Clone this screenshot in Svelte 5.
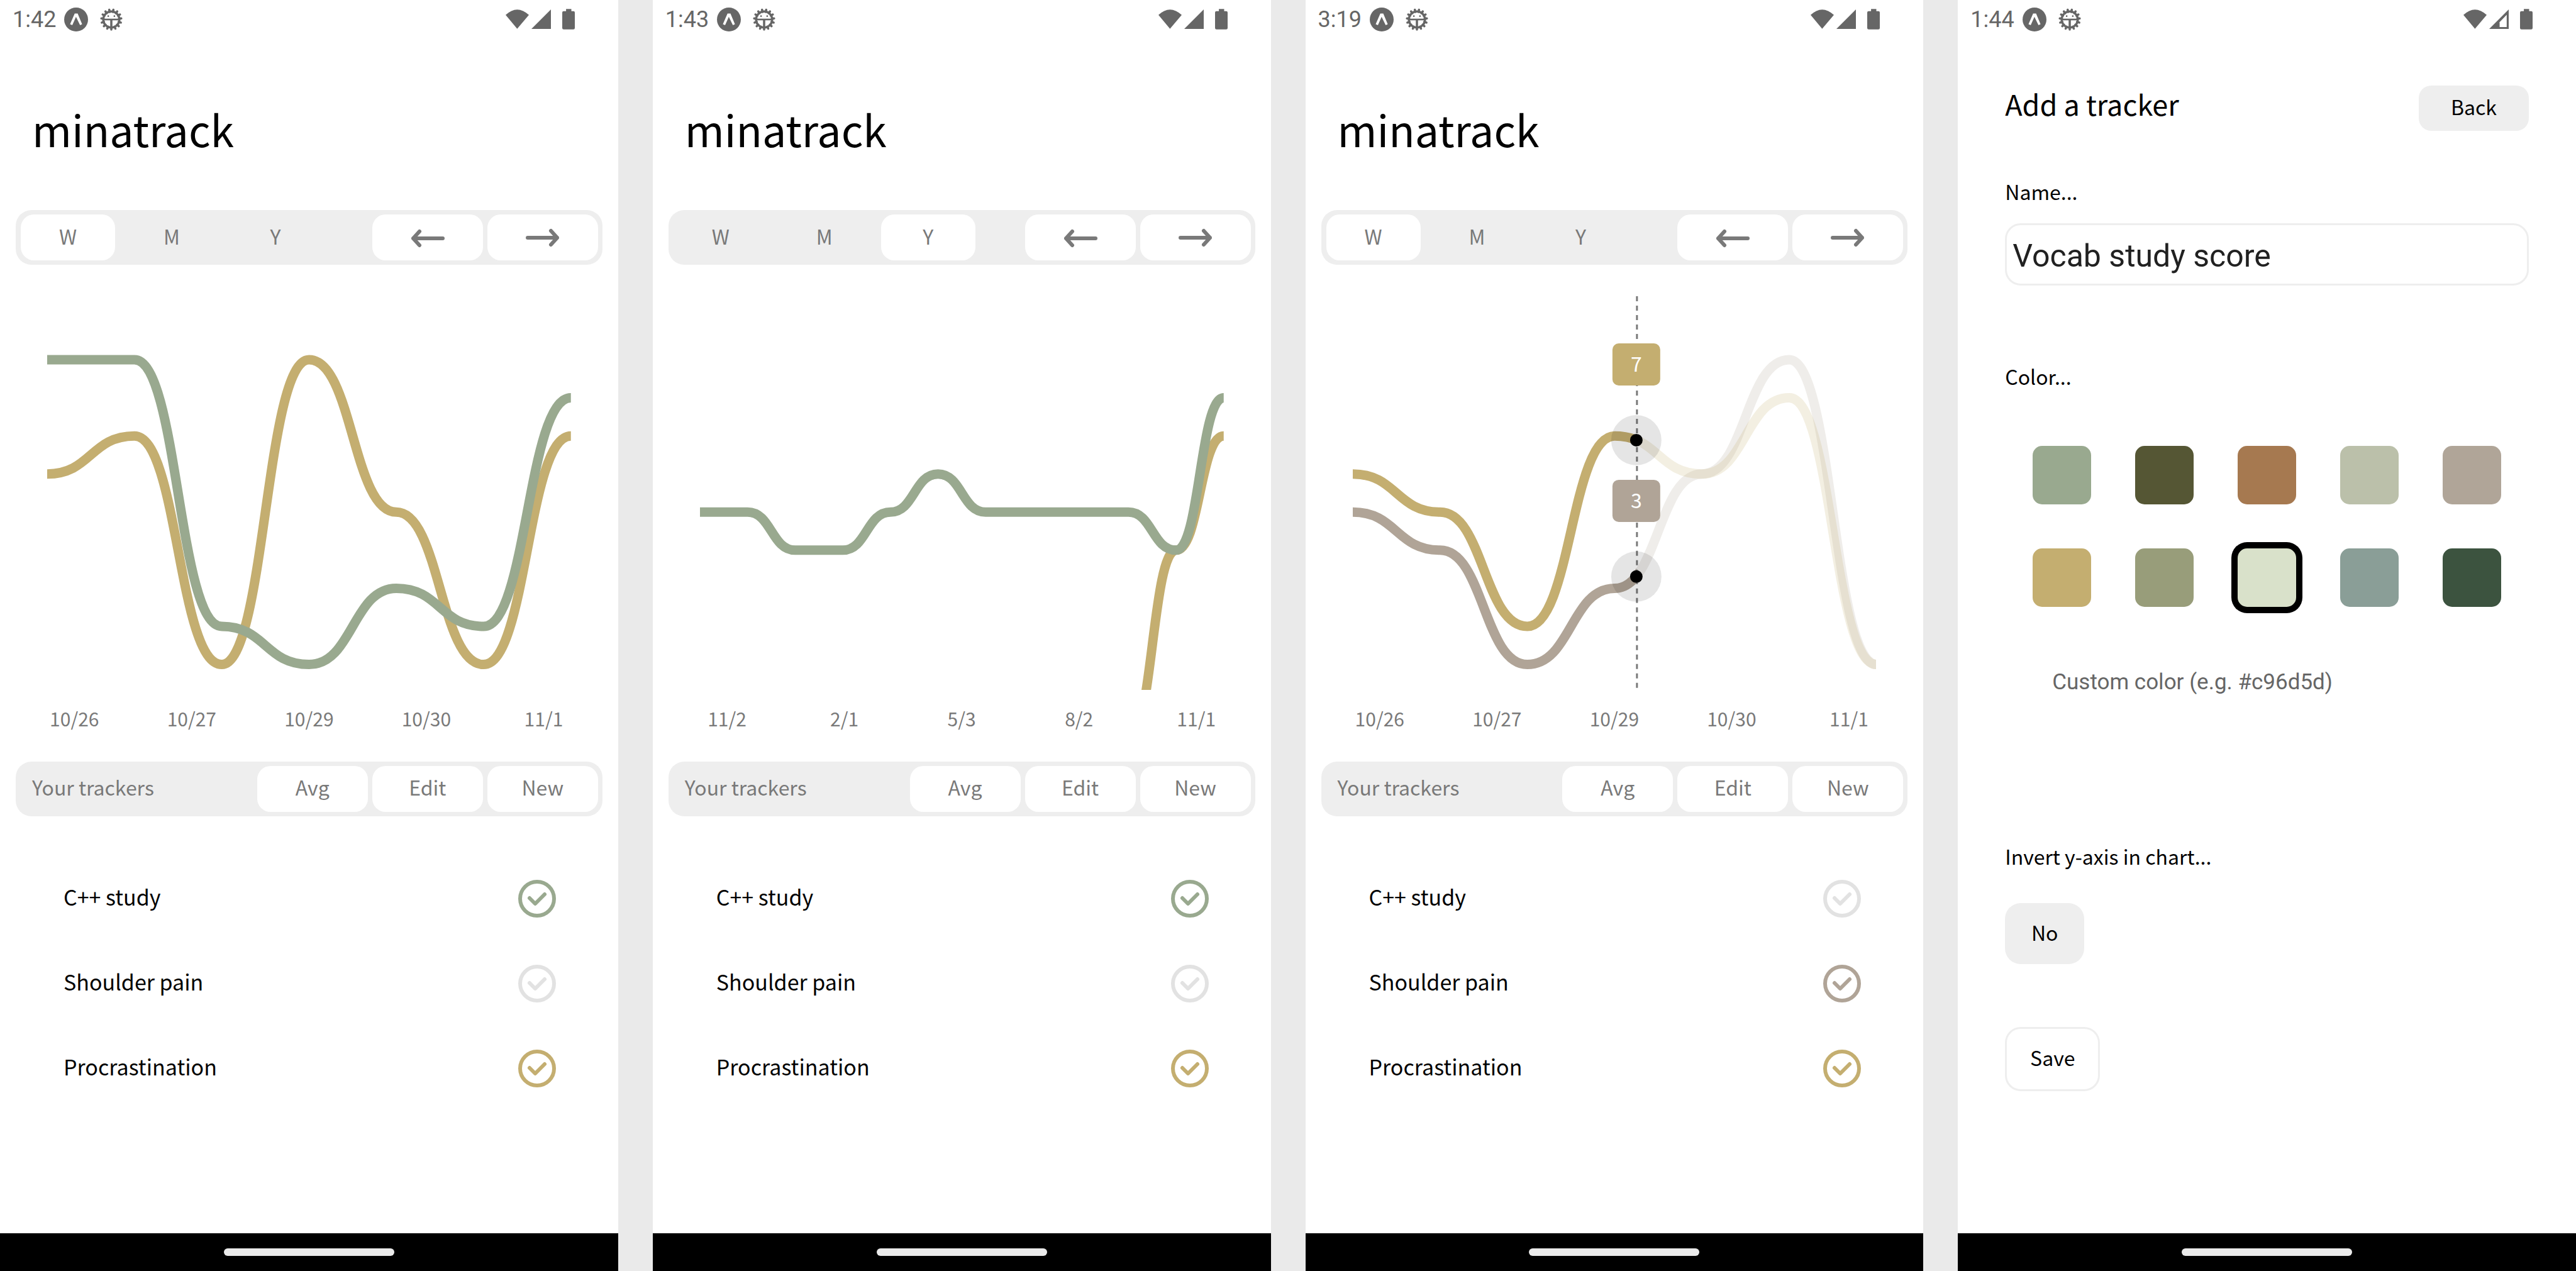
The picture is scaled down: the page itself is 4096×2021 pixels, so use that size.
<script>
  const GREEN = '#99a98f';
  const GOLD = '#c4ae70';
  const TAUPE = '#b0a497';

  const CHART_W = 833;
  const CHART_H = 626;
  const MAX_VALUE = 9;
  const TOP = 101;
  const STEP = 60.6;

  const yOf = (value) => TOP + (MAX_VALUE - value) * STEP;

  // Each segment leaves and enters its points horizontally.
  function linePath(values) {
    const dx = CHART_W / (values.length - 1);
    let d = '';
    values.forEach((value, i) => {
      if (value === null) return;
      const x = i * dx;
      const y = yOf(value);
      if (!d) {
        d = `M${x} ${y}`;
      } else {
        const mid = x - dx / 2;
        d += `C${mid} ${yOf(values[i - 1])} ${mid} ${y} ${x} ${y}`;
      }
    });
    return d;
  }

  const none = null;
  const screens = [
    {
      id: 'week',
      time: '1:42',
      range: 'W',
      labels: ['10/26', '10/27', '10/29', '10/30', '11/1'],
      series: [
        { color: GOLD, values: [6, 7, 1, 9, 5, 1, 7] },
        { color: GREEN, values: [9, 9, 2, 1, 3, 2, 8] }
      ],
      trackers: [
        { name: 'C++ study', color: GREEN, on: true },
        { name: 'Shoulder pain', color: TAUPE, on: false },
        { name: 'Procrastination', color: GOLD, on: true }
      ]
    },
    {
      id: 'year',
      time: '1:43',
      range: 'Y',
      labels: ['11/2', '2/1', '5/3', '8/2', '11/1'],
      series: [
        { color: GOLD, values: [none, none, none, none, none, none, none, none, none, -1, 4, 7] },
        { color: GREEN, values: [5, 5, 4, 4, 5, 6, 5, 5, 5, 5, 4, 8] }
      ],
      trackers: [
        { name: 'C++ study', color: GREEN, on: true },
        { name: 'Shoulder pain', color: TAUPE, on: false },
        { name: 'Procrastination', color: GOLD, on: true }
      ]
    },
    {
      id: 'cursor',
      time: '3:19',
      range: 'W',
      labels: ['10/26', '10/27', '10/29', '10/30', '11/1'],
      cursor: 451,
      series: [
        { color: TAUPE, values: [5, 4, 1, 3, 6, 9, 1], mark: { y: 446, text: '3' } },
        { color: GOLD, values: [6, 5, 2, 7, 6, 8, 1], mark: { y: 229, text: '7' } }
      ],
      trackers: [
        { name: 'C++ study', color: GREEN, on: false },
        { name: 'Shoulder pain', color: TAUPE, on: true },
        { name: 'Procrastination', color: GOLD, on: true }
      ]
    }
  ];

  const ranges = ['W', 'M', 'Y'];
  const swatches = [
    '#99a98f', '#555634', '#a67950', '#bbc0aa', '#b0a598',
    '#c4ae70', '#989d7a', '#d9e1ca', '#8a9e97', '#3c533f'
  ];
  const gearTeeth = Array.from({ length: 15 }, (_, i) => i * 24);

  let name = $state('Vocab study score');
  let custom = $state('');
  let picked = $state('#d9e1ca');
</script>

{#snippet statusBar(time, weak)}
  <header class="status">
    <span class="time">{time}</span>
    <svg class="expo" viewBox="354 40 129 129" aria-hidden="true">
      <circle cx="418.500" cy="104.500" r="64.500" fill="currentColor" />
      <path d="M411 72H427L451 130L440 135L418 90L398 135L386 130Z" fill="#fff" />
    </svg>
    <svg class="gear" viewBox="-21.500 -21.500 43 43" aria-hidden="true">
      {#each gearTeeth as angle}
        <path d="M0 14V18" transform="rotate({angle})" stroke="currentColor" stroke-width="4" stroke-linecap="round" />
      {/each}
      <circle r="14.500" fill="none" stroke="currentColor" stroke-width="4" />
      <path d="M-13 0H13" stroke="currentColor" stroke-width="3" />
      <path d="M0 0V13" stroke="currentColor" stroke-width="4" />
      <circle cx="-5.500" cy="-6" r="1.500" fill="currentColor" />
      <circle cx="5.500" cy="-6" r="1.500" fill="currentColor" />
    </svg>
    <span class="spacer"></span>
    <svg class="wifi" viewBox="0 0 129 107" aria-hidden="true">
      <path d="M0 30Q64 -30 129 30L64 107Z" fill="currentColor" />
    </svg>
    <svg class="signal" viewBox="0 0 107 107" aria-hidden="true">
      <path d="M0 107L107 0V107Z" fill="currentColor" />
      {#if weak}
        <path d="M57 70L96 29V97H57Z" fill="#fff" />
      {/if}
    </svg>
    <svg class="battery" viewBox="0 0 69 112" aria-hidden="true">
      <rect y="12" width="69" height="100" rx="8" fill="currentColor" />
      <path d="M21 0H50V14H21Z" fill="currentColor" />
    </svg>
  </header>
{/snippet}

{#snippet navBar()}
  <footer class="nav"><span class="pill"></span></footer>
{/snippet}

<main class="board">
  {#each screens as screen (screen.id)}
    <section class="phone">
      {@render statusBar(screen.time, false)}
      <div class="tracker-page">
        <h1>minatrack</h1>

        <div class="toolbar">
          <div class="ranges">
            {#each ranges as range}
              <button type="button" class="range" class:active={range === screen.range}>{range}</button>
            {/each}
          </div>
          <div class="actions">
            <button type="button" class="action" aria-label="Previous">
              <svg class="arrow" viewBox="0 0 56 32" aria-hidden="true"><path d="M52 17H5M15 6L5 17L15 28" /></svg>
            </button>
            <button type="button" class="action" aria-label="Next">
              <svg class="arrow" viewBox="0 0 56 32" aria-hidden="true"><path d="M4 16H51M41 5L51 16L41 27" /></svg>
            </button>
          </div>
        </div>

        <svg class="chart" viewBox="0 0 {CHART_W} {CHART_H}" role="img" aria-label="Tracker history">
          {#if screen.cursor}
            <defs>
              <clipPath id="past"><rect width={screen.cursor} height={CHART_H} /></clipPath>
              <clipPath id="future"><rect x={screen.cursor} width={CHART_W - screen.cursor} height={CHART_H} /></clipPath>
            </defs>
            {#each screen.series as line}
              <path class="line" clip-path="url(#past)" d={linePath(line.values)} stroke={line.color} />
              <path class="line faded" clip-path="url(#future)" d={linePath(line.values)} stroke={line.color} />
            {/each}
            <path class="cursor" d="M{screen.cursor + 1} 0V{CHART_H}" />
            {#each screen.series as line}
              <circle cx={screen.cursor} cy={line.mark.y} r="40" fill="#000" opacity="0.1" />
              <circle cx={screen.cursor} cy={line.mark.y} r="10" fill="#000" />
              <rect x={screen.cursor - 38} y={line.mark.y - 154} width="76" height="67" rx="10" fill={line.color} />
              <text class="mark" x={screen.cursor} y={line.mark.y - 109}>{line.mark.text}</text>
            {/each}
          {:else}
            {#each screen.series as line}
              <path class="line" d={linePath(line.values)} stroke={line.color} />
            {/each}
          {/if}
        </svg>

        <div class="axis">
          {#each screen.labels as label}
            <span>{label}</span>
          {/each}
        </div>

        <div class="toolbar">
          <h2>Your trackers</h2>
          <div class="actions">
            <button type="button" class="action">Avg</button>
            <button type="button" class="action">Edit</button>
            <button type="button" class="action">New</button>
          </div>
        </div>

        <ul class="trackers">
          {#each screen.trackers as tracker}
            <li>
              <label class="tracker">
                <span class="tracker-name">{tracker.name}</span>
                <span class="tick" style="color: {tracker.on ? tracker.color : '#e2e2e2'}">
                  <input type="checkbox" checked={tracker.on} />
                  <svg viewBox="0 0 60 60" aria-hidden="true">
                    <path d="M18 29L27 38L42 23" />
                  </svg>
                </span>
              </label>
            </li>
          {/each}
        </ul>
      </div>
      {@render navBar()}
    </section>
  {/each}

  <section class="phone">
    {@render statusBar('1:44', true)}
    <form class="form-page" onsubmit={(event) => event.preventDefault()}>
      <div class="form-head">
        <h2 class="form-title">Add a tracker</h2>
        <button type="button" class="back">Back</button>
      </div>

      <label class="field-label" for="tracker-name">Name...</label>
      <input id="tracker-name" class="name-input" type="text" bind:value={name} />

      <fieldset>
        <legend class="field-label">Color...</legend>
        <div class="swatches">
          {#each swatches as color}
            <input
              type="radio"
              name="color"
              value={color}
              aria-label={color}
              bind:group={picked}
              class="swatch"
              style="background-color: {color}"
            />
          {/each}
        </div>
        <input
          class="custom-input"
          type="text"
          aria-label="Custom color"
          placeholder="Custom color (e.g. #c96d5d)"
          bind:value={custom}
        />
      </fieldset>

      <span class="field-label" id="invert-label">Invert y-axis in chart...</span>
      <button type="button" class="invert" aria-describedby="invert-label">No</button>
      <button type="submit" class="save">Save</button>
    </form>
    {@render navBar()}
  </section>
</main>

<style>
  :global(body) {
    margin: 0;
    background: #eaeaea;
  }

  .board {
    display: grid;
    grid-template-columns: repeat(4, minmax(0, 1fr));
    gap: 55px;
    min-height: 100vh;
    color: #000;
    font-family: 'Noto Sans CJK JP', 'Noto Sans', sans-serif;
    font-size: 32px;
    line-height: 40px;
  }

  .board * {
    box-sizing: border-box;
  }

  .phone {
    display: flex;
    flex-direction: column;
    background: #fff;
  }

  /* Status bar */
  .status {
    display: flex;
    align-items: center;
    height: 61px;
    padding: 0 69px 0 20px;
    color: #666;
  }

  .status svg {
    display: block;
    flex: none;
  }

  .time {
    font-family: Roboto, sans-serif;
    font-size: 36px;
  }

  .spacer {
    flex: 1;
  }

  .expo {
    width: 38px;
    height: 38px;
    margin-left: 13px;
  }

  .gear {
    width: 38px;
    height: 38px;
    margin-left: 18px;
  }

  .wifi {
    width: 37px;
    height: 31px;
  }

  .signal {
    width: 31px;
    height: 31px;
    margin-left: 4px;
  }

  .battery {
    width: 20px;
    height: 33px;
    margin-left: 18px;
  }

  /* Navigation bar */
  .nav {
    display: flex;
    align-items: center;
    justify-content: center;
    height: 60px;
    background: #000;
  }

  .pill {
    width: 271px;
    height: 12px;
    border-radius: 6px;
    background: #eaeaea;
  }

  /* Buttons */
  button {
    margin: 0;
    padding: 0 0 6px;
    border: 0;
    color: inherit;
    font: inherit;
    cursor: pointer;
  }

  h1,
  h2 {
    margin: 0;
    font-weight: 400;
  }

  /* Tracker screens */
  .tracker-page {
    flex: 1;
    padding: 94px 25px 0;
  }

  h1 {
    margin: 0 26px 79px;
    font-size: 68px;
    line-height: 100px;
  }

  .toolbar {
    display: flex;
    align-items: center;
    justify-content: space-between;
    height: 87px;
    padding: 0 7px 0 8px;
    border-radius: 25px;
    background: #eee;
    color: #797979;
  }

  .toolbar h2 {
    padding: 0 0 6px 18px;
    font-size: 32px;
  }

  .ranges {
    display: flex;
    gap: 15px;
  }

  .actions {
    display: flex;
    gap: 7px;
  }

  .range,
  .action {
    height: 73px;
    border-radius: 21px;
    background: #fff;
  }

  .range {
    width: 150px;
    background: transparent;
  }

  .range.active {
    background: #fff;
  }

  .action {
    display: flex;
    align-items: center;
    justify-content: center;
    width: 176px;
  }

  .arrow {
    width: 56px;
    height: 32px;
    margin-top: 6px;
    fill: none;
    stroke: currentColor;
    stroke-width: 6;
    stroke-linecap: round;
    stroke-linejoin: round;
  }

  .chart {
    display: block;
    width: calc(100% - 100px);
    margin: 50px auto 25px;
    overflow: hidden;
  }

  .line {
    fill: none;
    stroke-width: 15;
  }

  .faded {
    opacity: 0.2;
  }

  .cursor {
    fill: none;
    stroke: #797979;
    stroke-width: 3;
    stroke-dasharray: 8 7;
  }

  .mark {
    fill: #fff;
    font-size: 32px;
    text-anchor: middle;
  }

  .axis {
    display: grid;
    grid-template-columns: repeat(5, 1fr);
    margin-bottom: 49px;
    color: #797979;
    font-size: 30px;
    text-align: center;
  }

  .trackers {
    margin: 64px 0 0;
    padding: 0;
    list-style: none;
  }

  .tracker {
    display: flex;
    align-items: center;
    justify-content: space-between;
    height: 135px;
    padding: 0 74px 0 76px;
    cursor: pointer;
  }

  .tracker-name {
    padding-bottom: 6px;
    font-size: 34px;
  }

  .tick {
    display: grid;
    width: 60px;
    height: 60px;
  }

  .tick input {
    grid-area: 1 / 1;
    width: 60px;
    height: 60px;
    margin: 0;
    border: 6px solid currentColor;
    border-radius: 50%;
    color: inherit;
    appearance: none;
  }

  .tick svg {
    grid-area: 1 / 1;
    fill: none;
    stroke: currentColor;
    stroke-width: 6;
    stroke-linecap: round;
    stroke-linejoin: round;
    pointer-events: none;
  }

  /* New tracker screen */
  .form-page {
    display: flex;
    flex: 1;
    flex-direction: column;
    align-items: flex-start;
    padding: 75px 75px 0;
  }

  .form-head {
    display: flex;
    align-items: center;
    justify-content: space-between;
    align-self: stretch;
    margin-bottom: 76px;
  }

  .form-title {
    padding-bottom: 14px;
    font-size: 45px;
    line-height: 56px;
  }

  .back {
    width: 175px;
    height: 72px;
    border-radius: 20px;
    background: #eee;
  }

  .field-label {
    padding: 0;
  }

  .name-input {
    align-self: stretch;
    height: 99px;
    margin: 31px 0 120px;
    padding: 4px 9px 0;
    border: 3px solid #eee;
    border-radius: 25px;
    background: #fff;
    color: #212121;
    font-family: Roboto, sans-serif;
    font-size: 50px;
  }

  fieldset {
    align-self: stretch;
    margin: 4px 0 0;
    padding: 0;
    border: 0;
  }

  .swatches {
    display: grid;
    grid-template-columns: repeat(5, 93px);
    gap: 70px;
    justify-content: center;
    margin-top: 91px;
  }

  .swatch {
    width: 93px;
    height: 93px;
    margin: 0;
    border-radius: 15px;
    appearance: none;
    cursor: pointer;
  }

  .swatch:checked {
    box-shadow: 0 0 0 10px #000;
  }

  .custom-input {
    display: block;
    width: 100%;
    height: 60px;
    margin: 89px 0 227px;
    padding: 0 75px;
    border: 0;
    background: transparent;
    color: #212121;
    font-family: Roboto, sans-serif;
    font-size: 35px;
  }

  .custom-input::placeholder {
    color: #666;
    opacity: 1;
  }

  .invert,
  .save {
    height: 97px;
    border-radius: 25px;
  }

  .invert {
    width: 126px;
    margin: 55px 0 100px;
    background: #eee;
  }

  .save {
    width: 151px;
    height: 102px;
    border: 3px solid #eee;
    background: #fff;
  }
</style>
